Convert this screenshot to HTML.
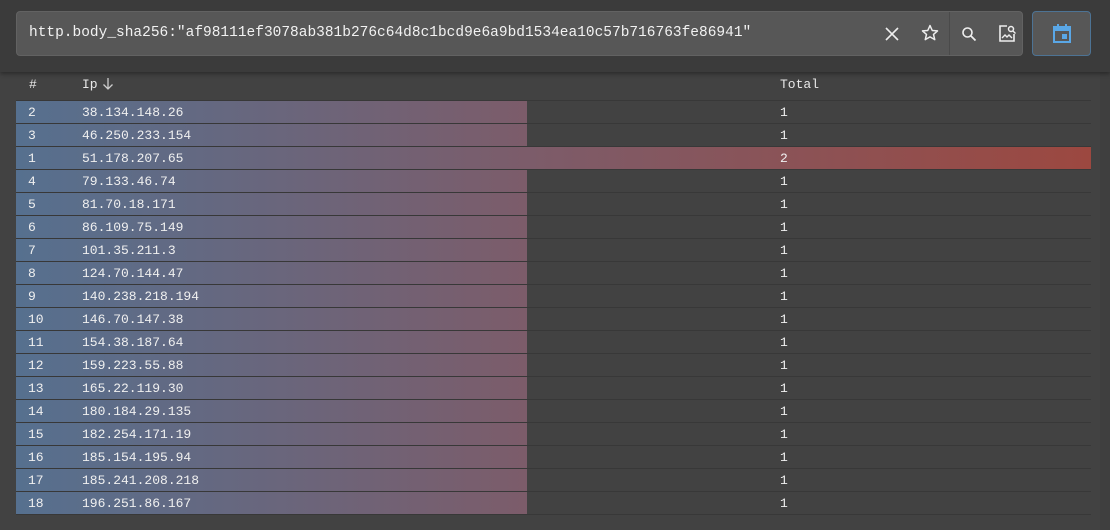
<!DOCTYPE html><html><head><style>
body{margin:0;width:1110px;height:530px;background:#424242;font-family:"Liberation Mono",monospace;color:#f0f0f0;overflow:hidden;position:relative}
.top{position:absolute;left:0;top:0;width:1110px;height:72px;background:#3b3b3b;box-shadow:0 2px 4px rgba(0,0,0,.35);z-index:2}
.inp{position:absolute;left:16px;top:11px;width:1007px;height:45px;background:#575757;border:1px solid #626262;border-radius:4px;box-sizing:border-box}
.inp .t{position:absolute;left:12px;top:13px;font-size:14.5px;color:#f2f2f2}
.sep{position:absolute;left:932px;top:0;width:1px;height:43px;background:#4a4a4a}
.cal{position:absolute;left:1032px;top:11px;width:59px;height:45px;background:#575757;border:1px solid #4d7394;border-radius:4px;box-sizing:border-box}
svg{position:absolute}
.hdr{position:absolute;top:77px;font-size:13px;color:#e8e8e8}
.row{position:absolute;left:16px;width:1075px;height:22px;border-bottom:1px solid #383838}
.bar{position:absolute;left:0;top:0;height:22px;background:linear-gradient(90deg,#56708f 0px,#7c5c6a 511px,#9c4840 1075px);background-size:1075px 22px}
.row span{position:absolute;top:4px;font-size:13px}
</style></head><body>
<div class="top">
<div class="inp"><div class="t">http.body_sha256:"af98111ef3078ab381b276c64d8c1bcd9e6a9bd1534ea10c57b716763fe86941"</div><div class="sep"></div></div>
<svg style="left:884px;top:26px" width="16" height="16" viewBox="0 0 16 16"><path d="M2 2L14 14M14 2L2 14" stroke="#eee" stroke-width="1.6"/></svg>
<svg style="left:920px;top:23px" width="20" height="20" viewBox="0 0 24 24"><path d="M12 3l2.7 6 6.3.5-4.8 4.2 1.5 6.3L12 16.6 6.3 20l1.5-6.3L3 9.5l6.3-.5z" fill="none" stroke="#eee" stroke-width="1.8" stroke-linejoin="round"/></svg>
<svg style="left:961px;top:26px" width="16" height="16" viewBox="0 0 16 16"><circle cx="6.5" cy="6.5" r="4.5" fill="none" stroke="#eee" stroke-width="1.6"/><path d="M10 10l4.5 4.5" stroke="#eee" stroke-width="1.8"/></svg>
<svg style="left:998px;top:24px" width="19" height="19" viewBox="0 0 19 19"><path d="M9 2H2v15h14v-7" fill="none" stroke="#eee" stroke-width="1.6"/><circle cx="13" cy="5" r="2.5" fill="none" stroke="#eee" stroke-width="1.5"/><path d="M15 7l2.5 2.5M4 14l3-3 2 2 2-2 3 3" fill="none" stroke="#eee" stroke-width="1.4"/></svg>
<div class="cal"></div>
<svg style="left:1052px;top:23px" width="20" height="20" viewBox="0 0 20 20"><path d="M2 4h16v15H2z" fill="none" stroke="#5aa7e6" stroke-width="2"/><path d="M2 4h16v4H2z" fill="#5aa7e6"/><path d="M6 1v4M14 1v4" stroke="#5aa7e6" stroke-width="2"/><rect x="10" y="11" width="5" height="5" fill="#5aa7e6"/></svg>
</div>
<div class="hdr" style="left:29px">#</div>
<div class="hdr" style="left:82px">Ip</div>
<svg style="left:101px;top:77px" width="14" height="14" viewBox="0 0 14 14"><path d="M7 1v11M2.5 7.5L7 12l4.5-4.5" fill="none" stroke="#ccc" stroke-width="1.3"/></svg>
<div class="hdr" style="left:780px">Total</div>
<div class="row" style="top:78px;height:22px"></div>
<div id="rows"></div>
<div style="position:absolute;left:1100px;top:72px;width:10px;height:458px;background:#3f3f3f"></div>
<script>
var d=[[2,"38.134.148.26",1],[3,"46.250.233.154",1],[1,"51.178.207.65",2],[4,"79.133.46.74",1],[5,"81.70.18.171",1],[6,"86.109.75.149",1],[7,"101.35.211.3",1],[8,"124.70.144.47",1],[9,"140.238.218.194",1],[10,"146.70.147.38",1],[11,"154.38.187.64",1],[12,"159.223.55.88",1],[13,"165.22.119.30",1],[14,"180.184.29.135",1],[15,"182.254.171.19",1],[16,"185.154.195.94",1],[17,"185.241.208.218",1],[18,"196.251.86.167",1]];
var h="";d.forEach(function(r,i){h+='<div class="row" style="top:'+(101+i*23)+'px"><div class="bar" style="width:'+(r[2]==2?1075:511)+'px"></div><span style="left:12px">'+r[0]+'</span><span style="left:66px">'+r[1]+'</span><span style="left:764px">'+r[2]+'</span></div>';});
document.getElementById("rows").innerHTML=h;
</script>
</body></html>
